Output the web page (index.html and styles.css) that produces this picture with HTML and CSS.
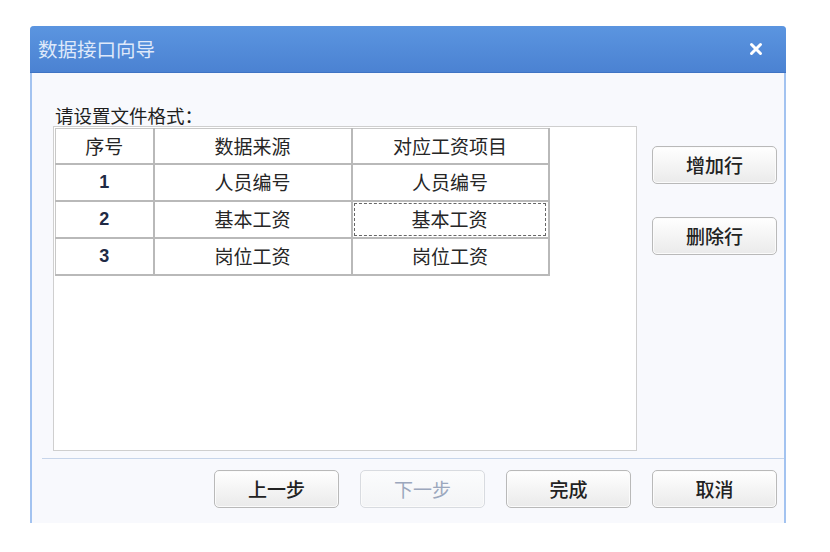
FILE: index.html
```html
<!DOCTYPE html>
<html lang="zh">
<head>
<meta charset="utf-8">
<link rel="stylesheet" href="styles.css">
</head>
<body>
<div class="dialog">
  <div class="titlebar">
    <span class="title">数据接口向导</span>
    <svg class="close" width="14" height="14" viewBox="0 0 14 14"><path d="M2.5 2.5 L11.5 11.5 M11.5 2.5 L2.5 11.5" stroke="#fff" stroke-width="3" stroke-linecap="round"/></svg>
  </div>
  <div class="content">
    <div class="label">请设置文件格式：</div>
    <div class="main">
      <div class="gridbox">
        <table class="grid">
          <colgroup><col class="c1"><col class="c2"><col class="c3"></colgroup>
          <tr class="head"><td>序号</td><td>数据来源</td><td>对应工资项目</td></tr>
          <tr><td class="num">1</td><td>人员编号</td><td>人员编号</td></tr>
          <tr><td class="num">2</td><td>基本工资</td><td><span class="focus">基本工资</span></td></tr>
          <tr><td class="num">3</td><td>岗位工资</td><td>岗位工资</td></tr>
        </table>
      </div>
      <div class="side">
        <button class="btn">增加行</button>
        <button class="btn">删除行</button>
      </div>
    </div>
  </div>
  <div class="separator"></div>
  <div class="footer">
    <button class="btn">上一步</button>
    <button class="btn disabled">下一步</button>
    <button class="btn">完成</button>
    <button class="btn">取消</button>
  </div>
</div>
</body>
</html>
```
FILE: styles.css
```css
* { box-sizing: border-box; }
html, body { margin: 0; padding: 0; background: #fff; }
body {
  font-family: "Noto Sans CJK SC", "Noto Sans", sans-serif;
  font-size: 18px;
  color: #222;
}
.dialog {
  margin: 26px 0 0 30px;
  width: 756px;
  height: 497px;
  background: #f8f9fd;
  border-left: 2px solid #a3c3f0;
  border-right: 2px solid #a3c3f0;
  border-radius: 4px 4px 0 0;
  display: flex;
  flex-direction: column;
}
.titlebar {
  height: 47px;
  margin: 0 -2px;
  background: linear-gradient(#5b95e0, #4b82d2);
  border-radius: 4px 4px 0 0;
  border-bottom: 1px solid #3f74c4;
  display: flex;
  align-items: center;
  justify-content: space-between;
  padding: 0 23px 0 8px;
}
.title {
  color: #dfe9fa;
  font-size: 19.5px;
  line-height: 24px;
}
.close { display: block; }
.content {
  padding: 0 7px 0 21px;
}
.label {
  margin-top: 31px;
  height: 22px;
  line-height: 22px;
  font-size: 18.5px;
  color: #1e1e1e;
  padding-left: 2px;
  white-space: nowrap;
}
.main {
  display: flex;
  gap: 15px;
}
.gridbox {
  width: 584px;
  height: 325px;
  background: #fff;
  border: 1px solid #cfcfcf;
  padding: 1px;
}
.grid {
  border-collapse: collapse;
  table-layout: fixed;
  width: 493px;
  border-right: 2px solid #8a8a8a;
  border-bottom: 2px solid #8a8a8a;
}
.grid col.c1 { width: 98px; }
.grid col.c2 { width: 198px; }
.grid col.c3 { width: 197px; }
.grid td {
  height: 37px;
  border: 2px solid #b9b9b9;
  border-top: none;
  border-left: none;
  text-align: center;
  font-size: 19px;
  line-height: 24px;
  color: #262626;
  padding: 0;
  position: relative;
  white-space: nowrap;
}
.grid tr.head td { height: 35px; border-top: 1px solid #c8c8c8; }
.grid tr td:first-child { border-left: 1px solid #c8c8c8; }
.grid td.num { color: #1f2a44; font-family: "Liberation Sans", sans-serif; font-size: 18px; font-weight: bold; }
.focus {
  position: absolute;
  inset: 1px 2px 1px 1px;
  border: 1px dashed #666;
  display: flex;
  align-items: center;
  justify-content: center;
}
.side {
  display: flex;
  flex-direction: column;
  gap: 33px;
  padding-top: 20px;
}
.btn {
  width: 125px;
  height: 38px;
  border: 1px solid #b9b9b9;
  border-radius: 5px;
  background: linear-gradient(#ffffff, #eaeaea);
  font-family: "Noto Sans CJK SC", sans-serif;
  font-size: 19px;
  line-height: 24px;
  font-weight: 500;
  color: #222;
  padding: 0;
  box-shadow: inset 0 0 0 1px #fbfbfb;
}
.btn.disabled {
  color: #9ba7bd;
  border-color: #d8dbe0;
  background: linear-gradient(#fbfcfd, #f3f4f6);
  font-weight: 400;
}
.separator {
  margin: 7px 0 0 10px;
  border-top: 1px solid #c7d5ea;
}
.footer {
  display: flex;
  justify-content: flex-end;
  gap: 21px;
  padding: 11px 7px 0 0;
}
```
